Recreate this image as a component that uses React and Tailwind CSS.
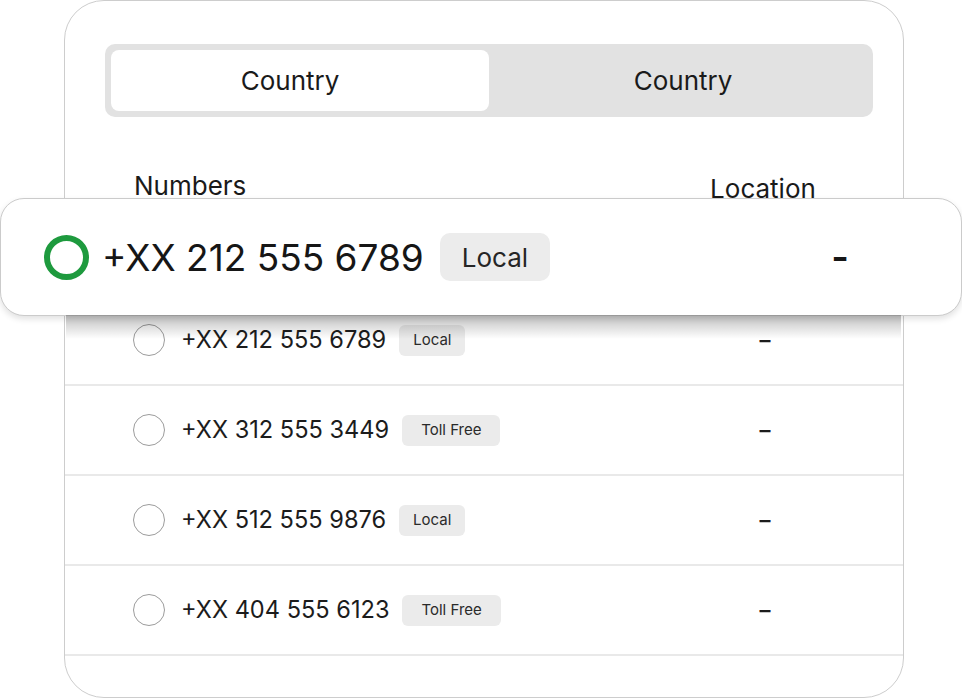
import React from 'react';

const rows = [
  { number: '+XX 212 555 6789', type: 'Local' },
  { number: '+XX 312 555 3449', type: 'Toll Free' },
  { number: '+XX 512 555 9876', type: 'Local' },
  { number: '+XX 404 555 6123', type: 'Toll Free' },
];

const NumberRow = ({ number, type }) => (
  <div className="flex items-center h-[90px] border-b-2 border-[#e9e9e9]">
    <div className="flex-1 flex items-center pl-[68px]">
      <span className="w-[32px] h-[32px] rounded-full border-[1.5px] border-[#9c9c9c] bg-white" />
      <span className="ml-[16px] text-[23.6px] leading-none text-[#1c1c1c]">{number}</span>
      <span
        className={`ml-[13px] h-[31px] flex items-center rounded-[6px] bg-[#ebebeb] text-[15px] text-[#2a2a2a] ${
          type === 'Local' ? 'px-[14px]' : 'px-[19px]'
        }`}
      >
        {type}
      </span>
    </div>
    <div className="w-[200px] mr-[38px] text-center text-[22px] leading-none font-semibold text-[#1c1c1c]">–</div>
  </div>
);

export default function App() {
  return (
    <div className="w-[962px] h-[698px] bg-white overflow-hidden font-['Inter','Liberation_Sans',sans-serif]">
      <div className="ml-[64px] w-[840px] h-[698px] border border-[#cdcdcd] rounded-[40px] bg-white pt-[43px]">
        {/* tab switcher */}
        <div className="ml-[40px] mr-[30px] h-[73px] p-[6px] bg-[#e2e2e2] rounded-[10px] grid grid-cols-2">
          <div className="flex items-center justify-center pr-[20px] bg-white rounded-[8px] text-[26px] text-[#1a1a1a]">
            Country
          </div>
          <div className="flex items-center justify-center pl-[10px] text-[26px] text-[#1a1a1a]">Country</div>
        </div>

        {/* column headings */}
        <div className="h-[81px] flex">
          <div className="flex-1 pl-[69px] pt-[53px] text-[26px] leading-[32px] text-[#1a1a1a]">Numbers</div>
          <div className="w-[200px] mr-[38px] pt-[56px] pr-[4px] text-center text-[26px] leading-[32px] text-[#1a1a1a]">
            Location
          </div>
        </div>

        {/* highlighted selection, wider than the card */}
        <div className="relative z-10 -ml-[65px] w-[962px] h-[118px] -mb-[20px] bg-white border border-[#cbcbcb] rounded-[24px] shadow-[0_3px_6px_rgba(0,0,0,0.12)] flex items-center">
          <div className="flex-1 flex items-center pl-[43px]">
            <span className="w-[45px] h-[45px] rounded-full border-[6.5px] border-[#1e9a3e]" />
            <span className="ml-[13px] text-[37px] leading-none text-[#161616]">+XX 212 555 6789</span>
            <span className="ml-[16px] h-[48px] px-[22px] flex items-center rounded-[10px] bg-[#ececec] text-[26px] text-[#262626]">
              Local
            </span>
          </div>
          <div className="w-[200px] mr-[21px] text-center text-[38px] leading-none font-semibold text-[#161616]">-</div>
          <div className="absolute top-full left-[65px] right-[60px] h-[24px] bg-gradient-to-b from-black/25 to-transparent" />
        </div>

        <div>
          {rows.map((row) => (
            <NumberRow key={row.number} {...row} />
          ))}
        </div>
      </div>
    </div>
  );
}
